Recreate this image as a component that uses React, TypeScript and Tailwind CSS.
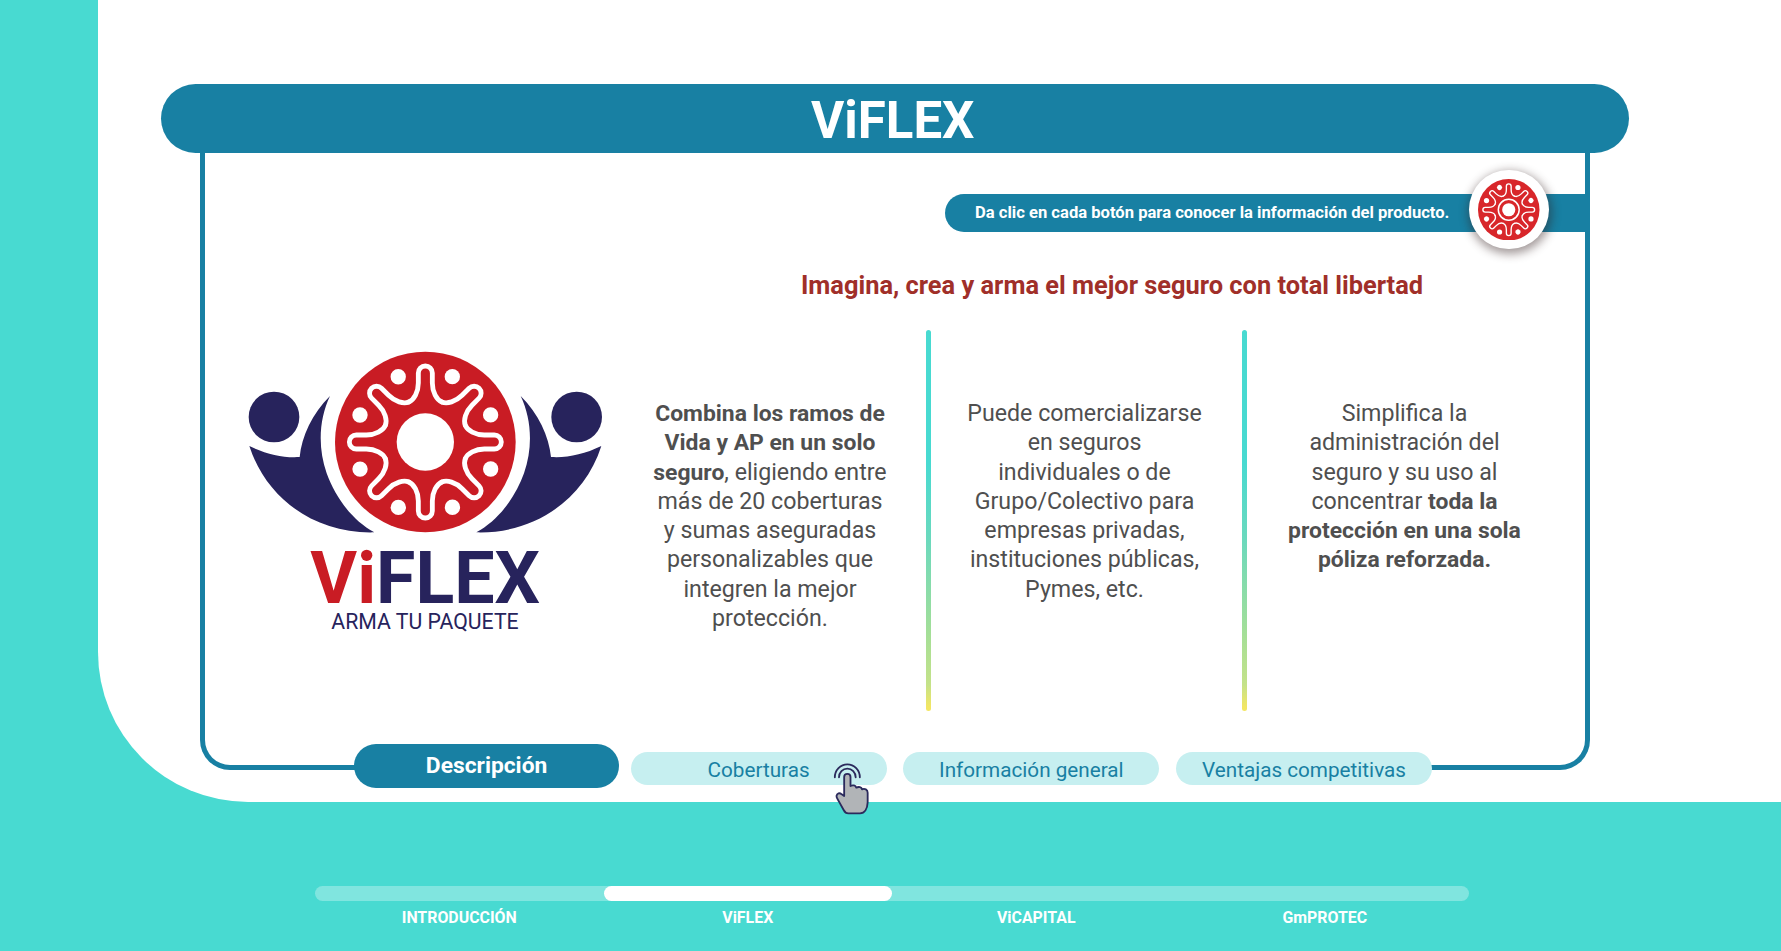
import React from "react";

const SPOKES = [0, 45, 90, 135, 180, 225, 270, 315];

function Sun({ color, ring = false }: { color: string; ring?: boolean }) {
  return (
    <g>
      <circle r="271" fill={color} />
      {SPOKES.map((angle) => (
        <g key={angle} transform={`rotate(${angle})`}>
          <path
            d="M-49.7 -120C-34 -126.5 -21 -150 -21 -177V-207A21 21 0 0 1 21 -207V-177C21 -150 34 -126.5 49.7 -120"
            fill="none"
            stroke="#fff"
            strokeWidth={ring ? 12 : 14.5}
            strokeLinecap="round"
          />
          <circle cx="81" cy="-196" r="23" fill="#fff" />
        </g>
      ))}
      {ring ? (
        <>
          <circle r="58" fill="#fff" />
          <circle r="92" fill="none" stroke="#fff" strokeWidth="13" />
        </>
      ) : (
        <circle r="86" fill="#fff" />
      )}
    </g>
  );
}

function Person() {
  return (
    <g fill="#27235c">
      <circle cx="132" cy="231" r="76" />
      <path d="M58 318C110 343 160 354 209 351C215 290 247 220 300 168C268 235 262 320 290 400C315 470 365 540 433 577C260 582 110 480 58 318Z" />
    </g>
  );
}

function Logo() {
  return (
    <svg className="block h-[300px] w-[390px]" viewBox="0 0 1170 900" aria-label="ViFLEX">
      <Person />
      <g transform="matrix(-1 0 0 1 1172 0)">
        <Person />
      </g>
      <g transform="translate(586 306)">
        <Sun color="#c91c24" />
      </g>
      <text x="241" y="789" fontSize="215" className="font-['Roboto',sans-serif] font-bold" fill="#27235c">
        <tspan fill="#c91c24">Vi</tspan>FLEX
      </text>
      <rect x="386" y="620" width="48" height="46" fill="#fff" />
      <circle cx="410" cy="646" r="17" fill="#c91c24" />
      <text x="304" y="866" fontSize="63.8" className="font-['Roboto',sans-serif]" fill="#27235c">
        ARMA TU PAQUETE
      </text>
    </svg>
  );
}

function TapHand() {
  return (
    <svg
      className="pointer-events-none absolute top-[3px] left-[194px] h-[65px] w-[55px]"
      viewBox="0 0 165 195"
      fill="none"
      stroke="#2b2a5c"
      strokeWidth="5.5"
      strokeLinecap="round"
      strokeLinejoin="round"
    >
      <path d="M29.500 67A37.500 39 0 0 1 104.500 67" />
      <path d="M42 67A25 26 0 0 1 92 67" />
      <path
        d="M57.500 123V66A9.500 9.500 0 0 1 76.500 66V93C83 89 92 91 94 98C101 94 110 96 111 103C119 99 128 104 128 113V142C127 161 119 175 105 175H70C62 175 59 171 56 165L42 140C40 134 34 129 34.500 123C36 114 44 113 49 117L57.500 123Z"
        fill="#b1b4b7"
      />
    </svg>
  );
}

function Divider() {
  return (
    <div className="h-[381px] w-[5px] rounded-full bg-[linear-gradient(to_bottom,#48dad1_0%,#48dad1_35%,#6bd9bd_55%,#a5df97_80%,#c4e289_93%,#f3e663_99%)]" />
  );
}

const TABS = ["Coberturas", "Información general", "Ventajas competitivas"];
const SECTIONS = ["INTRODUCCIÓN", "ViFLEX", "ViCAPITAL", "GmPROTEC"];

export default function App() {
  return (
    <div className="h-[951px] w-full overflow-hidden bg-[#48dad1] pl-[98px] font-['Roboto',sans-serif]">
      <main className="h-[802px] rounded-bl-[150px] bg-white pt-[84px] pl-[63px]">
        <header className="flex h-[69px] w-[1467.5px] items-center justify-center rounded-full bg-[#1880a3] pt-[4px] pr-[4px] text-[51px] leading-none font-bold text-white">
          <h1>ViFLEX</h1>
        </header>

        <section className="ml-[39px] h-[616.5px] w-[1389.5px] rounded-b-[30px] border-x-[5px] border-b-[5px] border-[#1880a3] pt-[40.5px]">
          <div className="relative -mr-[5px] ml-auto flex h-[38px] w-[645px] items-center rounded-l-full bg-[#1880a3] pt-[1px] pl-[30.500px] text-[16.6px] font-bold text-white">
            <span className="whitespace-nowrap">Da clic en cada botón para conocer la información del producto.</span>
            <div className="absolute -top-[24px] left-[524.500px] flex size-[79.500px] items-center justify-center rounded-full bg-white shadow-[1px_3px_10px_2px_rgba(50,30,30,0.45)]">
              <svg className="size-[61.5px]" viewBox="-271 -271 542 542">
                <Sun color="#d8262a" ring />
              </svg>
            </div>
          </div>

          <div className="flex">
            <div className="mt-[108.5px] ml-[25px] w-[390px] shrink-0">
              <Logo />
            </div>
            <div className="ml-[23px] w-[938px] shrink-0 pt-[33px]">
              <h2 className="text-center text-[25.4px] leading-[40px] font-bold text-[#a02f29]">
                Imagina, crea y arma el mejor seguro con total libertad
              </h2>
              <div className="mt-[25.500px] flex text-center text-[23.2px] leading-[29.3px] whitespace-nowrap text-[#4f4f4f] [&_b]:text-[22.900px]">
                <p className="w-[254px] pt-[69px]">
                  <b>Combina los ramos de</b>
                  <br />
                  <b>Vida y AP en un solo</b>
                  <br />
                  <b>seguro</b>, eligiendo entre
                  <br />
                  más de 20 coberturas
                  <br />
                  y sumas aseguradas
                  <br />
                  personalizables que
                  <br />
                  integren la mejor
                  <br />
                  protección.
                </p>
                <div className="mr-[28.500px] ml-[29px]">
                  <Divider />
                </div>
                <p className="w-[250px] pt-[69px]">
                  Puede comercializarse
                  <br />
                  en seguros
                  <br />
                  individuales o de
                  <br />
                  Grupo/Colectivo para
                  <br />
                  empresas privadas,
                  <br />
                  instituciones públicas,
                  <br />
                  Pymes, etc.
                </p>
                <div className="mx-[32.5px]">
                  <Divider />
                </div>
                <p className="w-[250px] pt-[69px]">
                  Simplifica la
                  <br />
                  administración del
                  <br />
                  seguro y su uso al
                  <br />
                  concentrar <b>toda la</b>
                  <br />
                  <b>protección en una sola</b>
                  <br />
                  <b>póliza reforzada.</b>
                </p>
              </div>
            </div>
          </div>
        </section>

        <nav className="relative -mt-[25.5px] ml-[193px] flex h-[43.500px] w-[1078px] items-start bg-[linear-gradient(to_right,transparent_20px,white_20px,white_1058px,transparent_1058px)]">
          <button className="h-[43.500px] w-[266px] rounded-full bg-[#1880a3] pt-[1.500px] text-[22.800px] leading-none font-bold text-white">
            Descripción
          </button>
          <div className="mt-[7.500px] ml-[11.500px] flex gap-[16.700px]">
            {TABS.map((tab, i) => (
              <div key={tab} className="relative">
                <button className="h-[33.500px] w-[256px] rounded-full bg-[#c6eff0] pt-[4.500px] text-[20.700px] leading-none whitespace-nowrap text-[#1880a3]">
                  {tab}
                </button>
                {i === 0 && <TapHand />}
              </div>
            ))}
          </div>
        </nav>
      </main>

      <footer className="mt-[84px] ml-[217px] w-[1154px]">
        <div className="h-[15px] rounded-full bg-[#80e5df]">
          <div className="ml-[25%] h-full w-1/4 rounded-full bg-white" />
        </div>
        <div className="mt-[4px] grid grid-cols-4 text-center text-[15.900px] leading-[25px] font-bold text-white">
          {SECTIONS.map((name) => (
            <span key={name}>{name}</span>
          ))}
        </div>
      </footer>
    </div>
  );
}
